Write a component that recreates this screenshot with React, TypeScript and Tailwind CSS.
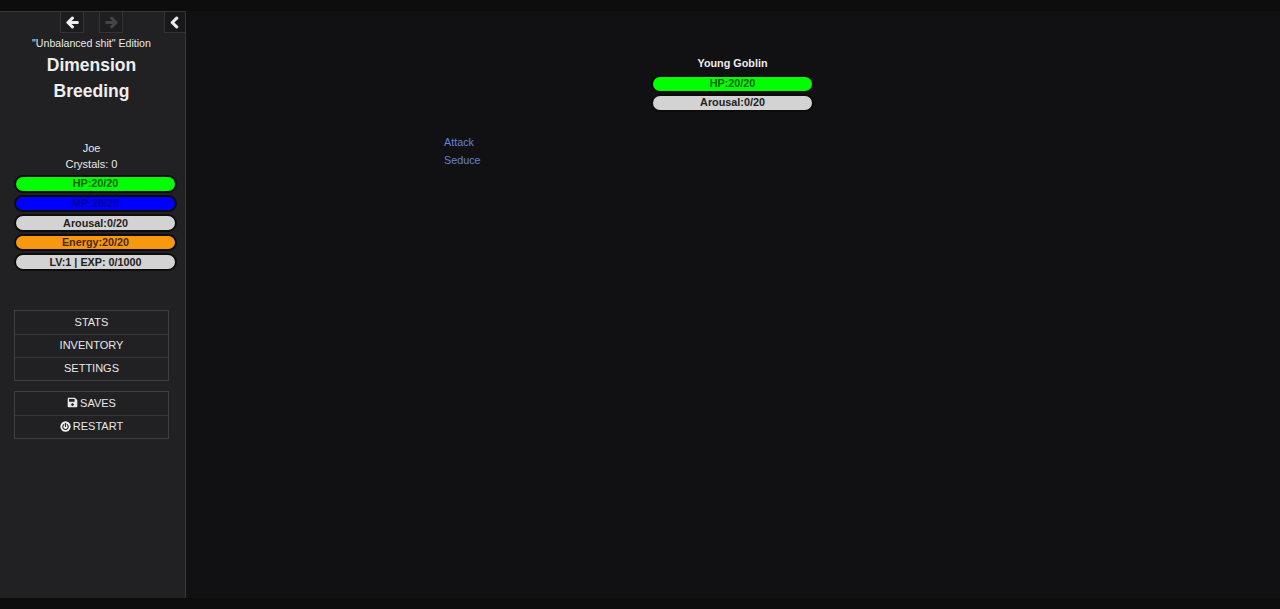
import { FaArrowLeft, FaArrowRight, FaChevronLeft, FaSave } from "react-icons/fa";
import type { ReactNode } from "react";

function Bar({ label, color, textColor = "text-[#222]" }: { label: string; color: string; textColor?: string }) {
  return (
    <div className={`h-[17.6px] w-[163px] -mx-px rounded-full border-2 border-[#0c0c0d] ${color} ${textColor} flex items-center justify-center text-[10.8px] font-bold leading-none`}>
      {label}
    </div>
  );
}

function MenuItem({ children, first }: { children: ReactNode; first?: boolean }) {
  return (
    <div className={`h-[23px] pb-[2px] flex items-center justify-center gap-[2px] text-[11px] text-[#e8e8e8] ${first ? "" : "border-t border-[#353537]"}`}>
      {children}
    </div>
  );
}

function PowerIcon() {
  return (
    <svg viewBox="0 0 12 12" className="w-[11px] h-[11px]">
      <circle cx="6" cy="6" r="5.6" fill="#eee" />
      <path d="M4.1 3.9a3 3 0 1 0 3.8 0" fill="none" stroke="#212124" strokeWidth="1.2" strokeLinecap="round" />
      <path d="M6 2.6v3.2" fill="none" stroke="#212124" strokeWidth="1.3" strokeLinecap="round" />
    </svg>
  );
}

export default function App() {
  return (
    <div className="h-[609px] bg-[#111113] flex flex-col overflow-hidden font-['Liberation_Sans',Arial,sans-serif]">
      <div className="h-[11px] bg-[#0d0d0e]" />
      <div className="flex-1 flex min-h-0">
        {/* Sidebar */}
        <aside className="w-[186px] shrink-0 bg-[#212124] border-r border-t border-[#37373a] relative flex flex-col">
          <div className="h-[21px] relative shrink-0">
            <div className="absolute left-[60px] top-0 w-[24px] h-[21px] border border-[#333336] border-t-0 bg-[#1c1c1e] flex items-center justify-center text-[#eee] text-[13px]">
              <FaArrowLeft className="stroke-[40px]" />
            </div>
            <div className="absolute left-[99px] top-0 w-[24px] h-[21px] border border-[#333336] border-t-0 bg-[#1e1e20] flex items-center justify-center text-[#444] text-[13px]">
              <FaArrowRight className="stroke-[40px]" />
            </div>
            <div className="absolute left-[164px] top-0 w-[21px] h-[21px] border-l border-b border-[#333336] bg-[#18181a] flex items-center justify-center text-[#eee] text-[13px]">
              <FaChevronLeft className="stroke-[40px] -ml-[2px]" />
            </div>
          </div>
          <div className="w-[183px] text-center text-[#e8e8e8]">
            <div className="text-[10.6px] leading-[20px]">"Unbalanced shit" Edition</div>
            <div className="text-[17.5px] font-bold leading-[26px] mt-[-1px] text-[#eee]">
              Dimension
              <br />
              Breeding
            </div>
            <div className="text-[11px] leading-[16px] mt-[36px]">Joe</div>
            <div className="text-[11px] leading-[16px]">Crystals: 0</div>
          </div>
          <div className="ml-[15px] mt-[3px] flex flex-col gap-[2px]">
            <Bar label="HP:20/20" color="bg-[#00ff00]" textColor="text-[#0b5a0b]" />
            <Bar label="MP:20/20" color="bg-[#0000ff]" textColor="text-[#00009a]" />
            <Bar label="Arousal:0/20" color="bg-[#d3d3d3]" />
            <Bar label="Energy:20/20" color="bg-[#f7980f]" textColor="text-[#4a2a05]" />
            <Bar label="LV:1 | EXP: 0/1000" color="bg-[#d3d3d3]" />
          </div>
          <div className="ml-[14px] mt-[39.5px] w-[155px] border border-[#3f3f42]">
            <MenuItem first>STATS</MenuItem>
            <MenuItem>INVENTORY</MenuItem>
            <MenuItem>SETTINGS</MenuItem>
          </div>
          <div className="ml-[14px] mt-[10px] w-[155px] border border-[#3f3f42]">
            <MenuItem first>
              <FaSave className="text-[11px]" />
              SAVES
            </MenuItem>
            <MenuItem>
              <PowerIcon />
              RESTART
            </MenuItem>
          </div>
        </aside>
        {/* Passage */}
        <main className="ml-[258px] w-[577px] pt-[45px]">
          <div className="flex flex-col items-center">
            <div className="text-[10.8px] font-bold leading-[14px] text-[#eee]">Young Goblin</div>
            <div className="mt-[5px] flex flex-col gap-[1.4px]">
              <Bar label="HP:20/20" color="bg-[#00ff00]" textColor="text-[#0b5a0b]" />
              <Bar label="Arousal:0/20" color="bg-[#d3d3d3]" />
            </div>
          </div>
          <div className="mt-[21px] text-[10.8px] leading-[18.5px] text-[#5f82d6]">
            <div>Attack</div>
            <div>Seduce</div>
          </div>
        </main>
      </div>
      <div className="h-[11px] bg-[#0d0d0e]" />
    </div>
  );
}
